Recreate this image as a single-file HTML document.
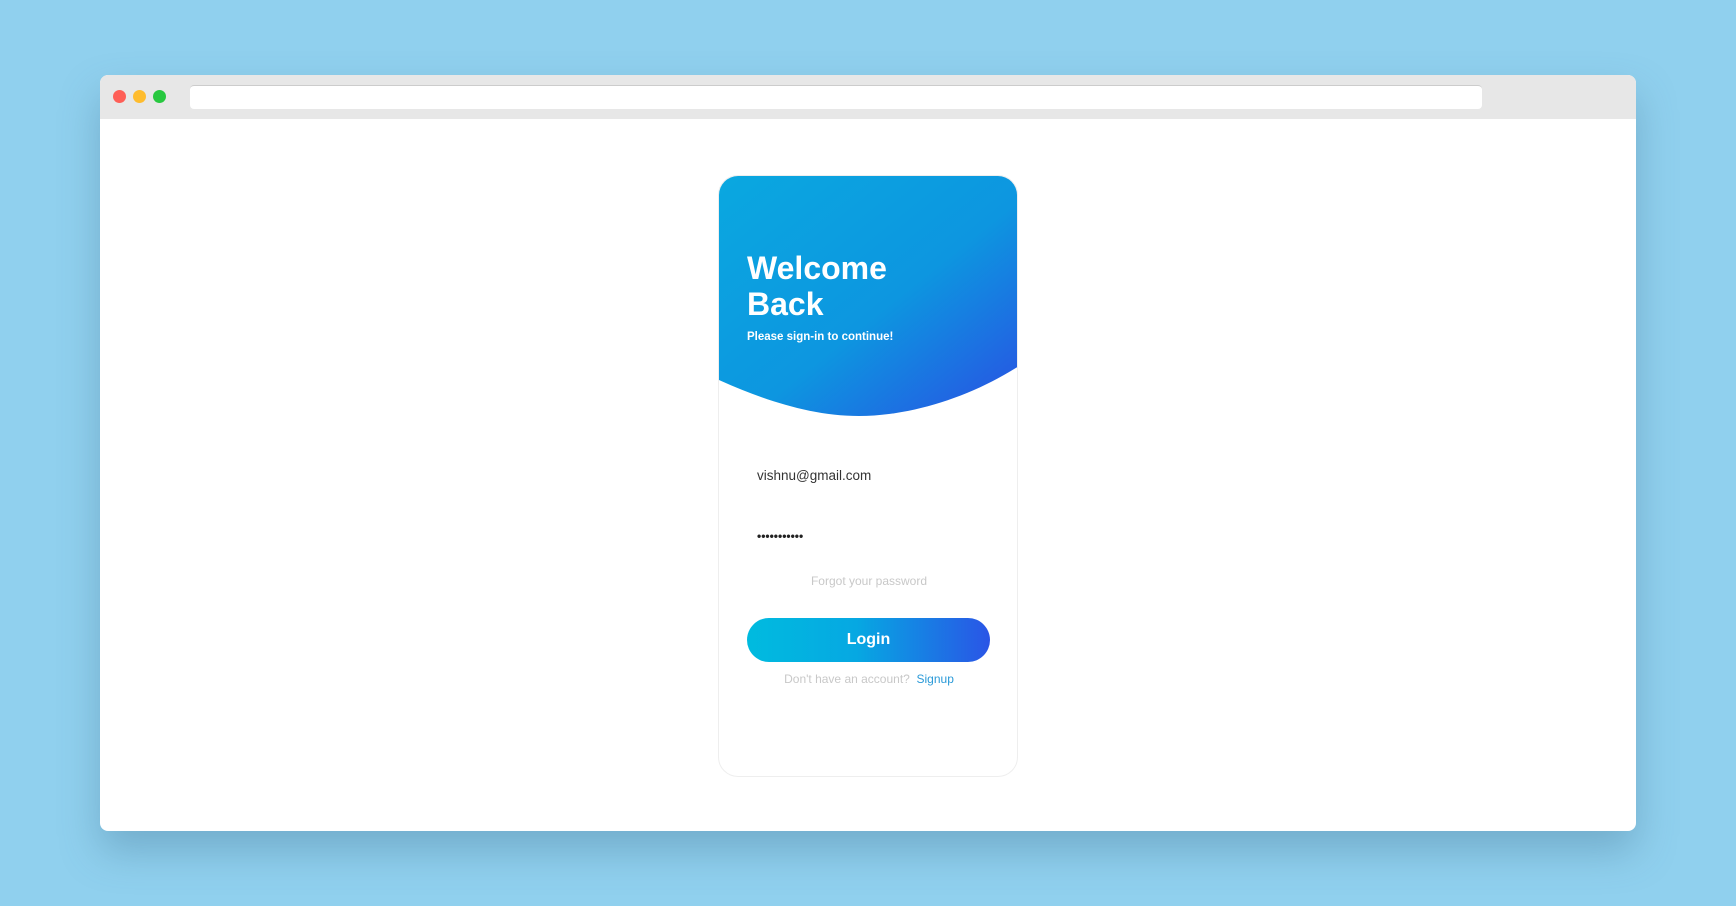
<!DOCTYPE html>
<html><head><meta charset="utf-8"><style>
*{margin:0;padding:0;box-sizing:border-box}
body{width:1736px;height:906px;background:#90d0ee;position:relative;overflow:hidden;font-family:"Liberation Sans",sans-serif}
.win{position:absolute;left:100px;top:75px;width:1536px;height:756px;background:#fff;border-radius:8px;overflow:hidden;box-shadow:0 20px 40px rgba(60,110,140,.35)}
.bar{position:absolute;left:0;top:0;width:100%;height:44px;background:#e7e7e7}
.dot{position:absolute;top:15px;width:13px;height:13px;border-radius:50%}
.addr{position:absolute;left:90px;top:10px;width:1292px;height:24px;background:#fff;border-radius:4px;border-top:1px solid #ccc}
.card{position:absolute;left:618px;top:100px;width:300px;height:602px;border-radius:20px;border:1px solid #eee;overflow:hidden;background:#fff}
.head{position:absolute;left:0;top:0}
.t{position:absolute;color:#fff}
</style></head><body>
<div class="win">
 <div class="bar">
  <div class="dot" style="left:13px;background:#fe5f57"></div>
  <div class="dot" style="left:33px;background:#febc2e"></div>
  <div class="dot" style="left:53px;background:#28c840"></div>
  <div class="addr"></div>
 </div>
 <div class="card">
  <svg class="head" width="300" height="260" viewBox="0 0 300 260">
   <defs><linearGradient id="g" x1="0" y1="0" x2="1" y2="1"><stop offset="0" stop-color="#0aa8e0"/><stop offset=".55" stop-color="#0d96e0"/><stop offset="1" stop-color="#2a4fe3"/></linearGradient></defs>
   <path d="M0 0H300V190C250 222 190 240 140 240C90 240 40 222 0 204Z" fill="url(#g)"/>
  </svg>
  <div class="t" style="left:28px;top:74px;font-size:32px;font-weight:bold;line-height:36px">Welcome<br>Back</div>
  <div class="t" style="left:28px;top:155px;font-size:11.5px;font-weight:bold">Please sign-in to continue!</div>
  <div style="position:absolute;left:38px;top:292px;font-size:13.5px;color:#333">vishnu@gmail.com</div>
  <div style="position:absolute;left:38px;top:353px;font-size:12px;color:#222;font-weight:bold;letter-spacing:0px">•••••••••••</div>
  <div style="position:absolute;left:0;width:300px;text-align:center;top:398px;font-size:12px;color:#c8c8c8">Forgot your password</div>
  <div style="position:absolute;left:28px;top:442px;width:243px;height:44px;border-radius:22px;background:linear-gradient(90deg,#00bbdf 0%,#06a8e2 45%,#2a55e6 100%);color:#fff;font-weight:bold;font-size:16px;text-align:center;line-height:44px">Login</div>
  <div style="position:absolute;left:0;width:300px;text-align:center;top:496px;font-size:12px;color:#c8c8c8">Don't have an account? &nbsp;<span style="color:#2b9ad8">Signup</span></div>
 </div>
</div>
</body></html>
